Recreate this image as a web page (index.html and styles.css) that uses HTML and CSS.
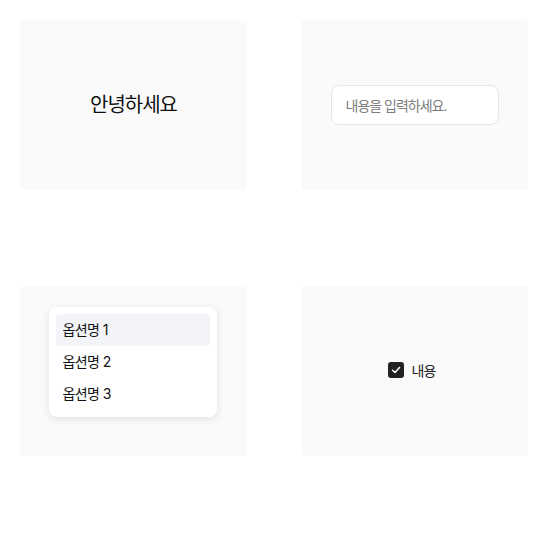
FILE: index.html
```html
<!DOCTYPE html>
<html lang="ko">
<head>
    <meta charset="UTF-8">
    <meta name="viewport" content="width=device-width, initial-scale=1.0">
    <title>Components</title>
    <link rel="stylesheet" href="styles.css">
</head>
<body>
    <div class="grid">
        <div class="panel">
            <div class="greeting">안녕하세요</div>
        </div>
        <div class="panel">
            <input type="text" class="text-input" placeholder="내용을 입력하세요.">
        </div>
        <div class="panel panel-top">
            <ul class="menu">
                <li class="menu-item active">옵션명 1</li>
                <li class="menu-item">옵션명 2</li>
                <li class="menu-item">옵션명 3</li>
            </ul>
        </div>
        <div class="panel">
            <label class="check">
                <span class="check-box">
                    <svg width="10" height="10" viewBox="0 0 10 10">
                        <path d="M1.5 5.2 L4 7.5 L8.5 2.6" fill="none" stroke="#fff" stroke-width="1.5" stroke-linecap="round" stroke-linejoin="round"/>
                    </svg>
                </span>
                <span class="check-label">내용</span>
            </label>
        </div>
    </div>
</body>
</html>
```

FILE: styles.css
```css
*{
    margin: 0;
    padding: 0;
    box-sizing: border-box;
    font-family: Inter, "Noto Sans CJK KR", "Noto Sans", sans-serif;
}
body{
    background-color: #fff;
}
.grid{
    display: grid;
    grid-template-columns: 227px 227px;
    column-gap: 54px;
    row-gap: 96px;
    padding: 20px;
}
.panel{
    height: 170px;
    background-color: #fafafa;
    border-radius: 4px;
    display: flex;
    align-items: center;
    justify-content: center;
}
.panel-top{
    align-items: flex-start;
    padding-top: 21px;
}
.greeting{
    font-size: 20px;
    letter-spacing: -1px;
    color: #111;
    margin-top: -4px;
}
.text-input{
    width: 168px;
    height: 40px;
    border: 1px solid #e6e6e6;
    border-radius: 8px;
    background-color: #fff;
    padding-left: 14px;
    font-size: 14px;
    letter-spacing: -1px;
    outline: none;
}
.text-input::placeholder{
    color: #7d7d7d;
}
.menu{
    list-style: none;
    width: 168px;
    background-color: #fff;
    border-radius: 8px;
    padding: 7px;
    margin-left: -2px;
    box-shadow: 0 2px 8px rgba(0, 0, 0, 0.1);
}
.menu-item{
    height: 32px;
    line-height: 32px;
    padding-left: 7px;
    border-radius: 4px;
    font-size: 14px;
    letter-spacing: -0.6px;
    color: #111;
}
.menu-item.active{
    background-color: #f3f4f8;
}
.check{
    display: flex;
    align-items: center;
    gap: 8px;
    margin-left: -6px;
    margin-top: -3px;
}
.check-box{
    width: 16px;
    height: 16px;
    border-radius: 3px;
    background-color: #222;
    display: flex;
    align-items: center;
    justify-content: center;
}
.check-label{
    font-size: 14px;
    letter-spacing: -1px;
    color: #222;
}
```
